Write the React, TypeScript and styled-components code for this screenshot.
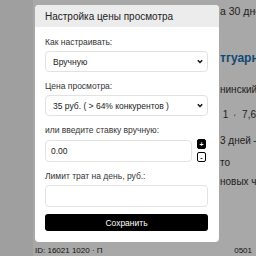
import styled, { createGlobalStyle } from 'styled-components';

const GlobalStyle = createGlobalStyle`
  html, body {
    margin: 0;
    padding: 0;
    width: 256px;
    height: 256px;
    overflow: hidden;
    font-family: "Liberation Sans", Arial, sans-serif;
  }
`;

const Page = styled.div`
  position: relative;
  width: 256px;
  height: 256px;
  background: #f2f2f2;
  display: flex;
  overflow: hidden;
`;

const Sidebar = styled.div`
  width: 33px;
  flex-shrink: 0;
`;

const Main = styled.div`
  flex: 1;
  min-width: 0;
  background: #fff;
  display: flex;
  flex-direction: column;
`;

const Content = styled.div`
  flex: 1;
  padding-left: 187px;
  display: flex;
  flex-direction: column;
  white-space: nowrap;
  color: #333;
`;

const Line = styled.div<{ $top: number; $bold?: boolean; $blue?: boolean; $size?: number }>`
  margin-top: ${p => p.$top}px;
  font-size: ${p => p.$size ?? 10}px;
  font-weight: ${p => (p.$bold ? 700 : 400)};
  color: ${p => (p.$blue ? '#1a6fb0' : '#333')};
  line-height: 14px;
  display: flex;
  align-items: center;
  gap: 6px;
`;

const Footer = styled.div`
  height: 12px;
  padding: 0 4px 0 2px;
  font-size: 8px;
  color: #222;
  display: flex;
  justify-content: space-between;
  align-items: center;
  white-space: nowrap;
`;

const Overlay = styled.div`
  position: absolute;
  inset: 0;
  background: rgba(0, 0, 0, 0.34);
`;

const Modal = styled.div`
  position: absolute;
  left: 35px;
  top: 5px;
  width: 184px;
  height: 237px;
  background: #fff;
  border-radius: 4px;
  overflow: hidden;
  display: flex;
  flex-direction: column;
`;

const Header = styled.div`
  height: 22px;
  flex-shrink: 0;
  background: #ececec;
  padding: 0 10px;
  display: flex;
  align-items: center;
  font-size: 10px;
  color: #222;
`;

const Body = styled.div`
  padding: 9px 11px 0 10px;
  display: flex;
  flex-direction: column;
`;

const Group = styled.div`
  display: flex;
  flex-direction: column;
  gap: 2px;
  margin-bottom: 8px;
`;

const Label = styled.div`
  font-size: 8.5px;
  line-height: 13px;
  color: #333;
`;

const SelectBox = styled.div`
  height: 21px;
  box-sizing: border-box;
  border: 1px solid #e2e2e2;
  border-radius: 4px;
  padding: 0 4px 0 7px;
  display: flex;
  align-items: center;
  justify-content: space-between;
  font-size: 8.5px;
  color: #222;
`;

const InputRow = styled.div`
  display: flex;
  align-items: center;
  gap: 5px;
`;

const TextInput = styled.div<{ $grow?: boolean }>`
  flex: ${p => (p.$grow ? '1' : 'none')};
  height: 22px;
  box-sizing: border-box;
  border: 1px solid #e2e2e2;
  border-radius: 4px;
  padding: 0 5px;
  display: flex;
  align-items: center;
  font-size: 8.5px;
  color: #222;
`;

const StepColumn = styled.div`
  display: flex;
  flex-direction: column;
  gap: 3px;
  margin-right: 2px;
`;

const StepButton = styled.div<{ $filled?: boolean }>`
  width: 9px;
  height: 10px;
  box-sizing: border-box;
  border-radius: 2px;
  border: 1px solid #000;
  background: ${p => (p.$filled ? '#000' : '#fff')};
  color: ${p => (p.$filled ? '#fff' : '#000')};
  font-size: 7px;
  line-height: 7px;
  display: flex;
  align-items: center;
  justify-content: center;
  font-weight: 700;
`;

const SaveButton = styled.div`
  margin-top: -1px;
  height: 17px;
  background: #000;
  color: #fff;
  border-radius: 3px;
  display: flex;
  align-items: center;
  justify-content: center;
  font-size: 8.5px;
`;

const Chevron = () => (
  <svg width="6" height="5" viewBox="0 0 6 5">
    <path d="M0.8 1.2 L3 3.5 L5.2 1.2" fill="none" stroke="#111" strokeWidth="1.5" />
  </svg>
);

const Funnel = () => (
  <svg width="7" height="7" viewBox="0 0 7 7">
    <path d="M0 0 H7 L4.2 3.2 V7 H2.8 V3.2 Z" fill="#222" />
  </svg>
);

export default function App() {
  return (
    <>
      <GlobalStyle />
      <Page>
        <Sidebar />
        <Main>
          <Content>
            <Line $top={4} $size={10.5}>а 30 дней</Line>
            <Line $top={33} $bold $blue $size={12}>тгуарна</Line>
            <Line $top={18}>нинский</Line>
            <Line $top={11}>&nbsp;1 <Funnel /> 7,6</Line>
            <Line $top={12}>3 дней — д</Line>
            <Line $top={8}>то</Line>
            <Line $top={5}>новых часов</Line>
          </Content>
          <Footer>
            <span>ID: 16021 1020 · П</span>
            <span>0501</span>
          </Footer>
        </Main>
        <Overlay />
        <Modal>
          <Header>Настройка цены просмотра</Header>
          <Body>
            <Group>
              <Label>Как настраивать:</Label>
              <SelectBox>
                <span>Вручную</span>
                <Chevron />
              </SelectBox>
            </Group>
            <Group>
              <Label>Цена просмотра:</Label>
              <SelectBox>
                <span>35 руб. ( &gt; 64% конкурентов )</span>
                <Chevron />
              </SelectBox>
            </Group>
            <Group>
              <Label>или введите ставку вручную:</Label>
              <InputRow>
                <TextInput $grow>0.00</TextInput>
                <StepColumn>
                  <StepButton $filled>+</StepButton>
                  <StepButton>-</StepButton>
                </StepColumn>
              </InputRow>
            </Group>
            <Group>
              <Label>Лимит трат на день, руб.:</Label>
              <TextInput />
            </Group>
            <SaveButton>Сохранить</SaveButton>
          </Body>
        </Modal>
      </Page>
    </>
  );
}
